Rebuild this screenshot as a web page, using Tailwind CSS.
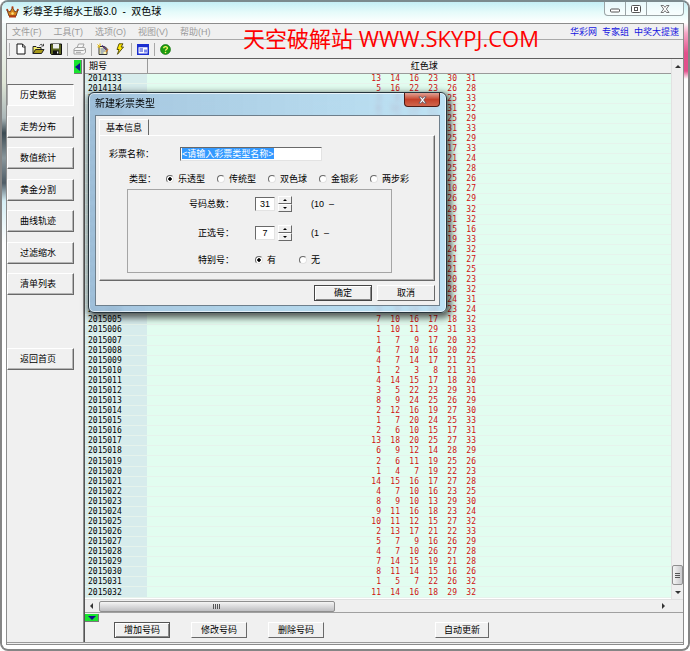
<!DOCTYPE html>
<html lang="zh-CN">
<head>
    <meta charset="UTF-8">
    <meta name="viewport" content="width=device-width, initial-scale=1.0">
    <title>彩尊圣手缩水王版3.0 - 双色球</title>
    <script src="https://cdn.jsdelivr.net/npm/@tailwindcss/browser@4"></script>
</head>
<body class="bg-white font-['Liberation_Sans','Noto_Sans_CJK_SC',sans-serif] text-[9px] leading-[12px] text-black">
    <div class="relative h-screen min-h-[600px] flex flex-col border-2 border-t-[#7b8a8e] border-[#858585] rounded-lg overflow-hidden bg-white">

        <!-- Barre de titre -->
        <header class="h-[21px] shrink-0 flex items-start justify-between pl-1 bg-linear-to-b from-[#c4eef5] via-[#e6fbfa] to-white">
            <div class="flex items-center gap-1 h-[20px]">
                <svg class="w-[13px] h-[12px]" viewBox="0 0 13 12">
                    <path d="M1 4 4 6 6.500 1.500 9 6 12 4 10 10H3z" fill="#d8861c" stroke="#5b2410" stroke-width=".8"/>
                    <path d="M3 9.500h7v2H3z" fill="#b23a14"/>
                    <circle cx="1.200" cy="3.800" r="1" fill="#b23a14"/><circle cx="6.500" cy="1.300" r="1.100" fill="#b23a14"/><circle cx="11.800" cy="3.800" r="1" fill="#b23a14"/>
                    <circle cx="6.500" cy="7.500" r="1.200" fill="#ffe27a"/>
                </svg>
                <h1 class="text-[10px] whitespace-pre">彩尊圣手缩水王版3.0  -  双色球</h1>
            </div>
            <div class="flex h-[14px] mr-1 border border-t-0 border-[#9aa4a6] rounded-b bg-white/60">
                <button class="w-[21px] flex items-center justify-center border-r border-[#9aa4a6]" aria-label="最小化">
                    <svg class="w-[10px] h-[8px]" viewBox="0 0 10 8"><rect x=".5" y="4" width="9" height="3" rx="1" fill="#fff" stroke="#555"/></svg>
                </button>
                <button class="w-[21px] flex items-center justify-center border-r border-[#9aa4a6]" aria-label="最大化">
                    <svg class="w-[10px] h-[8px]" viewBox="0 0 10 8"><rect x=".5" y=".5" width="9" height="7" rx="1" fill="#fff" stroke="#555"/><rect x="3.500" y="2.500" width="3" height="3" fill="#fff" stroke="#555"/></svg>
                </button>
                <button class="w-[36px] flex items-center justify-center" aria-label="关闭">
                    <svg class="w-[10px] h-[8px]" viewBox="0 0 10 8"><path d="M1 .5h2.500L5 2.300 6.500.5H9L6.300 4 9 7.500H6.500L5 5.700 3.500 7.500H1L3.700 4z" fill="#fff" stroke="#555" stroke-width=".8"/></svg>
                </button>
            </div>
        </header>

        <div class="flex-1 min-h-0 flex pb-1">
            <div class="w-[4px] shrink-0 bg-[linear-gradient(#f4fafa_0,#dfe6d6_60px,#aab6b8_95px,#3b4a52_110px,#8a979c_135px,#4e5c66_160px,#d5eef5_178px,#fff_220px)]"></div>

            <!-- Zone cliente -->
            <div class="flex-1 min-w-0 flex flex-col border border-[#8c8c8c] bg-[#f0f0f0]">
                <nav class="relative h-[16px] shrink-0 flex items-center justify-between pl-[5px] pr-1 border-b border-[#a9a9a9]">
                    <div class="flex gap-[12px] text-[#9b9b9b]">
                        <button>文件(F)</button>
                        <button>工具(T)</button>
                        <button>选项(O)</button>
                        <button>视图(V)</button>
                        <button>帮助(H)</button>
                    </div>
                    <div class="flex gap-[5px] text-[#1414e0]">
                        <a href="#">华彩网</a>
                        <a href="#">专家组</a>
                        <a href="#">中奖大提速</a>
                    </div>
                    <p class="absolute left-[236px] top-0 text-[22px] leading-[28px] text-[#ff0000] whitespace-nowrap font-['Open_Sans','Noto_Sans_CJK_SC',sans-serif]">天空破解站 WWW.SKYPJ.COM</p>
                </nav>

                <!-- Barre d'outils -->
                <div class="h-[19px] shrink-0 flex items-center gap-[5px] pl-[2px] border-b border-[#5f5f5f]">
                    <span class="w-px h-[13px] bg-[#b0b0b0]"></span>
                    <button aria-label="新建"><svg class="w-[12px] h-[12px]" viewBox="0 0 12 12"><path d="M2 1h5.500L10 3.500V11H2z" fill="#fff" stroke="#111"/><path d="M7.500 1v3H10" fill="none" stroke="#111" stroke-width=".8"/></svg></button>
                    <button aria-label="打开"><svg class="w-[13px] h-[12px]" viewBox="0 0 13 12"><path d="M1 10.500V3.500h3l1 1h4v2" fill="#f4ec6a" stroke="#222"/><path d="M1 10.500 3.500 6.500H12L9.500 10.500z" fill="#a89a1c" stroke="#222"/><path d="M7.500 2.500c1-1.500 2.500-1.500 3.500 0M11.500.8v2.200H9.300" fill="none" stroke="#222" stroke-width=".8"/></svg></button>
                    <button aria-label="保存"><svg class="w-[12px] h-[12px]" viewBox="0 0 12 12"><path d="M.5 1h11v10.500h-10l-1-1z" fill="#5a6420" stroke="#111"/><path d="M3 1h6v4.500H3z" fill="#eee"/><path d="M3 7.500h6v4H3z" fill="#111"/><path d="M7 8.500h1.300v2H7z" fill="#eee"/></svg></button>
                    <span class="w-px h-[13px] bg-[#a8a8a8]"></span>
                    <button aria-label="打印"><svg class="w-[13px] h-[12px]" viewBox="0 0 13 12"><path d="M4 5 5.500 1H11L9.500 5M1 6l2-1.500h8.500L12.500 6v3.500L10.500 11H1zM1 7.500h9.500l2-1.500M3 9.300h5" fill="#f6f6f6" stroke="#a2a2a2"/></svg></button>
                    <span class="w-px h-[13px] bg-[#a8a8a8]"></span>
                    <button aria-label="数据"><svg class="w-[12px] h-[12px]" viewBox="0 0 12 12"><path d="M2 3.500h5.500L10 5.500V11.500H2z" fill="#fff6b0" stroke="#333"/><path d="M3.500 6h4M3.500 8h5M3.500 10h3" stroke="#2a50c0" stroke-width=".8"/><path d="M.5 1.500 3 4M3 .5V3M.5 4H3" stroke="#e0b400"/><path d="M5 2.500 9.500 7" stroke="#4a2a70" stroke-width="1.300"/><path d="m8.500 8.500 2-3 1 1-2 3z" fill="#c87a28"/></svg></button>
                    <button aria-label="计算"><svg class="w-[12px] h-[12px]" viewBox="0 0 12 12"><path d="M5 .8h4L7 4h2.500L3.500 11.300 5 6.500H3z" fill="#ffe600" stroke="#4a4400" stroke-width=".9"/></svg></button>
                    <span class="w-px h-[13px] bg-[#a8a8a8]"></span>
                    <button aria-label="窗口"><svg class="w-[12px] h-[11px]" viewBox="0 0 12 11"><rect x=".75" y=".75" width="10.500" height="9.500" fill="#fff" stroke="#1b2ed0" stroke-width="1.500"/><path d="M1 1h10v2.200H1z" fill="#1b2ed0"/><path d="M2.500 5h3.500M2.500 7h3.500" stroke="#1b2ed0"/><path d="M7 5.500h3v3H7z" fill="#7a86ee"/></svg></button>
                    <span class="w-px h-[13px] bg-[#a8a8a8]"></span>
                    <button aria-label="帮助"><svg class="w-[11px] h-[11px]" viewBox="0 0 11 11"><circle cx="5.500" cy="5.500" r="5" fill="#1c9c10" stroke="#0c6a08" stroke-width=".6"/><path d="M3.700 4.200c0-2.200 3.700-2.200 3.700 0C7.400 5.300 5.500 5.300 5.500 6.700" fill="none" stroke="#fff76a" stroke-width="1.300"/><circle cx="5.500" cy="8.500" r=".8" fill="#fff76a"/></svg></button>
                </div>

                <div class="flex-1 min-h-0 flex border-b border-[#9a9a9a] mb-px">
                    <!-- Menu latéral -->
                    <aside class="w-[77px] shrink-0 flex flex-col items-start border-r border-[#8c8c8c]">
                        <button class="self-end mr-px mt-px w-[8px] h-[14px] flex items-center justify-center bg-[#19e32f] border-r border-b border-[#777]" aria-label="隐藏">
                            <svg class="w-[5px] h-[8px]" viewBox="0 0 5 8"><path d="M5 0v8L0 4z" fill="#10108c"/></svg>
                        </button>
                        <div class="mt-[10px] h-[211px] w-[67px] flex flex-col justify-between">
                            <button class="h-[22px] border border-t-[#6e6e6e] border-l-[#aaa] border-r-white border-b-white bg-[#f7f7f7] pr-[5px]">历史数据</button>
                            <button class="h-[22px] border border-t-white border-l-white border-[#696969] shadow-[inset_-1px_-1px_0_#b5b5b5] pr-[5px]">走势分布</button>
                            <button class="h-[22px] border border-t-white border-l-white border-[#696969] shadow-[inset_-1px_-1px_0_#b5b5b5] pr-[5px]">数值统计</button>
                            <button class="h-[22px] border border-t-white border-l-white border-[#696969] shadow-[inset_-1px_-1px_0_#b5b5b5] pr-[5px]">黄金分割</button>
                            <button class="h-[22px] border border-t-white border-l-white border-[#696969] shadow-[inset_-1px_-1px_0_#b5b5b5] pr-[5px]">曲线轨迹</button>
                            <button class="h-[22px] border border-t-white border-l-white border-[#696969] shadow-[inset_-1px_-1px_0_#b5b5b5] pr-[5px]">过滤缩水</button>
                            <button class="h-[22px] border border-t-white border-l-white border-[#696969] shadow-[inset_-1px_-1px_0_#b5b5b5] pr-[5px]">清单列表</button>
                        </div>
                        <button class="mt-[53px] h-[22px] w-[67px] border border-t-white border-l-white border-[#696969] shadow-[inset_-1px_-1px_0_#b5b5b5] pr-[5px]">返回首页</button>
                    </aside>

                    <main class="flex-1 min-w-0 flex flex-col border-l border-[#555]">
                        <div class="flex-1 min-h-0 flex">
                            <!-- Tableau des tirages -->
                            <div class="flex-1 min-w-0 overflow-hidden bg-white pb-px">
                                <table class="w-[calc(100%+30px)] h-full table-fixed border-collapse">
                                    <colgroup>
                                        <col class="w-[62px]"><col>
                                        <col class="w-[19px]"><col class="w-[19px]"><col class="w-[19px]"><col class="w-[19px]"><col class="w-[19px]"><col class="w-[19px]">
                                        <col>
                                    </colgroup>
                                    <thead>
                                        <tr class="h-[14px] bg-[#f0f0f0] border-b border-[#9a9a9a]">
                                            <th class="font-normal text-left pl-[4px] border-r border-[#9a9a9a]">期号</th>
                                            <th class="font-normal" colspan="8">红色球</th>
                                        </tr>
                                    </thead>
                                    <tbody id="draws" class="font-['DejaVu_Sans_Mono',monospace] text-[8px] leading-[9px] bg-[#e2fdf0]"></tbody>
                                </table>
                            </div>
                            <div class="w-[12px] shrink-0 flex flex-col items-center justify-between bg-[#efefef] border-l border-[#e2e2e2] pt-[6px] pb-[5px]">
                                <svg class="w-[6px] h-[3px]" viewBox="0 0 6 3"><path d="M0 3 3 0l3 3z" fill="#333"/></svg>
                                <div class="flex flex-col items-center gap-[6px]">
                                    <div class="w-[11px] h-[20px] flex flex-col items-center justify-center gap-px border border-[#8f8f8f] rounded-xs bg-linear-to-r from-[#f5f5f5] to-[#c9c9cc]">
                                        <span class="w-[5px] h-px bg-[#555]"></span><span class="w-[5px] h-px bg-[#555]"></span><span class="w-[5px] h-px bg-[#555]"></span>
                                    </div>
                                    <svg class="w-[6px] h-[3px]" viewBox="0 0 6 3"><path d="M0 0h6L3 3z" fill="#333"/></svg>
                                </div>
                            </div>
                        </div>
                        <div class="h-[13px] shrink-0 flex items-center bg-[#efefef] border-t border-[#e0e0e0] pl-[5px] pr-[18px]">
                            <svg class="w-[3px] h-[6px] mr-[6px]" viewBox="0 0 3 6"><path d="M3 0v6L0 3z" fill="#333"/></svg>
                            <div class="w-[41%] h-[11px] flex items-center justify-center gap-px border border-[#8f8f8f] rounded-xs bg-linear-to-b from-[#f5f5f5] to-[#bfbfc2]">
                                <span class="w-px h-[5px] bg-[#555]"></span><span class="w-px h-[5px] bg-[#555]"></span><span class="w-px h-[5px] bg-[#555]"></span><span class="w-px h-[5px] bg-[#555]"></span>
                            </div>
                            <svg class="w-[3px] h-[6px] ml-auto" viewBox="0 0 3 6"><path d="M0 0v6l3-3z" fill="#333"/></svg>
                        </div>

                        <!-- Actions -->
                        <footer class="h-[30px] shrink-0 flex items-start border-t border-[#a0a0a0]">
                            <button class="w-[14px] h-[8px] mt-px flex items-center justify-center bg-[#19e32f] border-r border-b border-[#777]" aria-label="收起">
                                <svg class="w-[8px] h-[4px]" viewBox="0 0 8 4"><path d="M0 0h8L4 4z" fill="#10108c"/></svg>
                            </button>
                            <button class="ml-[15px] mt-[9px] w-[56px] h-[16px] border border-[#555] shadow-[inset_1px_1px_0_#fff,inset_-1px_-1px_0_#8a8a8a]">增加号码</button>
                            <button class="ml-[21px] mt-[9px] w-[56px] h-[16px] border border-t-white border-l-white border-[#696969]">修改号码</button>
                            <button class="ml-[21px] mt-[9px] w-[56px] h-[16px] border border-t-white border-l-white border-[#696969]">删除号码</button>
                            <button class="ml-auto mr-[194px] mt-[9px] w-[54px] h-[16px] border border-t-white border-l-white border-[#696969]">自动更新</button>
                        </footer>
                    </main>
                </div>
            </div>

            <div class="w-[4px] shrink-0 bg-[linear-gradient(#fff_0,#f7a6c6_10px,#e2508c_30px,#e2508c_48px,#fff_56px)]"></div>
        </div>

        <!-- Boîte de dialogue -->
        <section role="dialog" aria-label="新建彩票类型" class="absolute left-[86px] top-[90px] w-[359px] h-[221px] flex flex-col px-[6px] pb-[6px] rounded-md border border-[#27343c] bg-linear-to-r from-[#9dbfdc]/90 to-[#b5dcf5]/80 backdrop-blur-[2px] shadow-[inset_0_0_0_1px_#ffffffaa,2px_3px_7px_2px_#000000a0]">
            <div class="h-[22px] shrink-0 flex items-start justify-between">
                <h2 class="text-[10px] leading-[22px]">新建彩票类型</h2>
                <button class="w-[36px] h-[14px] flex items-center justify-center rounded-b border border-t-0 border-[#4d1a14] bg-linear-to-b from-[#e0a195] via-[#c4412a] to-[#d0654c]" aria-label="关闭">
                    <svg class="w-[9px] h-[8px]" viewBox="0 0 10 8"><path d="M1 .5h2.500L5 2.300 6.500.5H9L6.300 4 9 7.500H6.500L5 5.700 3.500 7.500H1L3.700 4z" fill="#fff" stroke="#4b4b5c" stroke-width=".8"/></svg>
                </button>
            </div>
            <form class="flex-1 flex flex-col border border-[#6e7f8c] bg-[#f0f0f0] pl-[3px] pr-[4px] pt-[3px]">
                <button type="button" class="w-[50px] h-[16px] border-l border-white border-r border-r-[#696969] border-t border-t-white">基本信息</button>
                <div class="h-[146px] border border-white border-r-[#696969] border-b-[#696969] shadow-[inset_-1px_-1px_0_#b5b5b5] pt-[10px] pl-[9px] flex flex-col">
                    <div class="flex items-center h-[15px]">
                        <label for="name" class="w-[71px]">彩票名称：</label>
                        <div class="w-[142px] h-[14px] flex items-center border border-t-[#696969] border-l-[#696969] border-[#e3e3e3] bg-white pl-px">
                            <input id="name" type="text" value="&lt;请输入彩票类型名称&gt;" class="field-sizing-content h-[11px] bg-[#3399ff] text-white outline-none">
                        </div>
                    </div>
                    <fieldset class="flex items-center mt-[12px] pl-[20px]">
                        <legend class="float-left w-[37px]">类型：</legend>
                        <label class="w-[51px] flex items-center gap-[4px]"><input type="radio" name="type" checked class="appearance-none w-[8px] h-[8px] rounded-full border border-[#e3e3e3] border-t-[#696969] border-l-[#696969] bg-white checked:bg-[radial-gradient(#000_35%,#fff_45%)]">乐透型</label>
                        <label class="w-[51px] flex items-center gap-[4px]"><input type="radio" name="type" class="appearance-none w-[8px] h-[8px] rounded-full border border-[#e3e3e3] border-t-[#696969] border-l-[#696969] bg-white checked:bg-[radial-gradient(#000_35%,#fff_45%)]">传统型</label>
                        <label class="w-[51px] flex items-center gap-[4px]"><input type="radio" name="type" class="appearance-none w-[8px] h-[8px] rounded-full border border-[#e3e3e3] border-t-[#696969] border-l-[#696969] bg-white checked:bg-[radial-gradient(#000_35%,#fff_45%)]">双色球</label>
                        <label class="w-[51px] flex items-center gap-[4px]"><input type="radio" name="type" class="appearance-none w-[8px] h-[8px] rounded-full border border-[#e3e3e3] border-t-[#696969] border-l-[#696969] bg-white checked:bg-[radial-gradient(#000_35%,#fff_45%)]">金银彩</label>
                        <label class="w-[51px] flex items-center gap-[4px]"><input type="radio" name="type" class="appearance-none w-[8px] h-[8px] rounded-full border border-[#e3e3e3] border-t-[#696969] border-l-[#696969] bg-white checked:bg-[radial-gradient(#000_35%,#fff_45%)]">两步彩</label>
                    </fieldset>
                    <div class="mt-[4px] ml-[18px] w-[265px] h-[84px] flex flex-col justify-around border border-[#a5a5a5]">
                        <div class="flex items-center">
                            <label for="total" class="w-[106px] text-right mr-[21px]">号码总数：</label>
                            <input id="total" type="text" value="31" class="w-[20px] h-[14px] border border-t-[#696969] border-l-[#696969] border-[#e3e3e3] bg-white text-center outline-none">
                            <div class="ml-[3px] w-[14px]">
                                <button type="button" aria-label="加" class="w-full h-[8px] flex items-center justify-center border border-t-white border-l-white border-[#696969]"><svg class="w-[4px] h-[2px]" viewBox="0 0 4 2"><path d="M0 2 2 0l2 2z"/></svg></button>
                                <button type="button" aria-label="减" class="w-full h-[8px] flex items-center justify-center border border-t-white border-l-white border-[#696969]"><svg class="w-[4px] h-[2px]" viewBox="0 0 4 2"><path d="M0 0h4L2 2z"/></svg></button>
                            </div>
                            <span class="ml-[19px]">(10 &nbsp;–</span>
                        </div>
                        <div class="flex items-center">
                            <label for="main" class="w-[106px] text-right mr-[21px]">正选号：</label>
                            <input id="main" type="text" value="7" class="w-[20px] h-[14px] border border-t-[#696969] border-l-[#696969] border-[#e3e3e3] bg-white text-center outline-none">
                            <div class="ml-[3px] w-[14px]">
                                <button type="button" aria-label="加" class="w-full h-[8px] flex items-center justify-center border border-t-white border-l-white border-[#696969]"><svg class="w-[4px] h-[2px]" viewBox="0 0 4 2"><path d="M0 2 2 0l2 2z"/></svg></button>
                                <button type="button" aria-label="减" class="w-full h-[8px] flex items-center justify-center border border-t-white border-l-white border-[#696969]"><svg class="w-[4px] h-[2px]" viewBox="0 0 4 2"><path d="M0 0h4L2 2z"/></svg></button>
                            </div>
                            <span class="ml-[19px]">(1 &nbsp;–</span>
                        </div>
                        <div class="flex items-center">
                            <span class="w-[106px] text-right mr-[21px]">特别号：</span>
                            <label class="w-[44px] flex items-center gap-[4px]"><input type="radio" name="special" checked class="appearance-none w-[8px] h-[8px] rounded-full border border-[#e3e3e3] border-t-[#696969] border-l-[#696969] bg-white checked:bg-[radial-gradient(#000_35%,#fff_45%)]">有</label>
                            <label class="flex items-center gap-[4px]"><input type="radio" name="special" class="appearance-none w-[8px] h-[8px] rounded-full border border-[#e3e3e3] border-t-[#696969] border-l-[#696969] bg-white checked:bg-[radial-gradient(#000_35%,#fff_45%)]">无</label>
                        </div>
                    </div>
                </div>
                <div class="mt-[4px] flex justify-end gap-[5px]">
                    <button type="submit" class="w-[58px] h-[16px] border border-[#444] shadow-[inset_1px_1px_0_#fff,inset_-1px_-1px_0_#8a8a8a]">确定</button>
                    <button type="button" class="w-[58px] h-[16px] border border-t-white border-l-white border-[#696969]">取消</button>
                </div>
            </form>
        </section>
    </div>

    <script>
        // Tirages : un tableau par période, de 2014133 à 2014152 puis de 2015001 à 2015032
        const draws2014 = [
            [13,14,16,23,30,31], [5,16,22,23,26,28], [3,8,12,20,25,33], [6,14,19,27,31,32],
            [2,7,11,18,25,29], [4,10,15,26,31,33], [1,9,13,22,25,29], [3,5,8,12,17,33],
            [2,6,11,17,21,24], [7,12,16,19,25,28], [4,8,13,20,25,26], [1,3,5,8,10,27],
            [6,11,17,22,26,29], [5,9,18,24,29,32], [8,14,20,27,31,32], [2,4,7,11,15,16],
            [1,6,10,13,19,33], [3,12,17,20,24,32], [5,8,14,18,21,27], [2,9,11,16,21,25]
        ];
        const draws2015 = [
            [4,7,13,17,20,23], [6,10,19,22,28,32], [1,8,15,21,24,31], [5,9,14,18,23,24],
            [7,10,16,17,18,32], [1,10,11,29,31,33], [1,7,9,17,20,33], [4,7,10,16,20,22],
            [4,7,14,17,21,25], [1,2,3,8,21,31], [4,14,15,17,18,20], [3,5,22,23,29,31],
            [8,9,24,25,26,29], [2,12,16,19,27,30], [1,7,20,24,25,33], [2,6,10,15,17,31],
            [13,18,20,25,27,33], [6,9,12,14,28,29], [2,6,11,19,25,26], [1,4,7,19,22,23],
            [14,15,16,17,27,28], [4,7,10,16,23,25], [8,9,10,13,29,30], [9,11,16,18,23,24],
            [10,11,12,15,27,32], [2,13,17,21,22,33], [5,7,9,16,26,29], [4,7,10,26,27,28],
            [7,14,15,19,21,28], [8,11,14,15,16,26], [1,5,7,22,26,32], [11,14,16,18,29,32]
        ];

        const rows = [
            ...draws2014.map((balls, i) => [2014133 + i, balls]),
            ...draws2015.map((balls, i) => [2015001 + i, balls])
        ];

        document.getElementById('draws').innerHTML = rows.map(([issue, balls]) => `
            <tr class="border-b border-[#e6f3ec]">
                <td class="pl-[3px] bg-[#d7ecec]">${issue}</td>
                <td></td>
                ${balls.map(n => `<td class="text-right pr-[5px] text-[#d01010]">${n}</td>`).join('')}
                <td></td>
            </tr>`).join('');
    </script>
</body>
</html>
